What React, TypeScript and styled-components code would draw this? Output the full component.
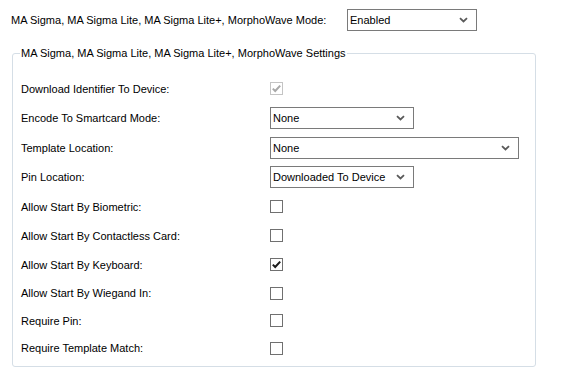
import styled, { createGlobalStyle } from "styled-components";

const GlobalStyle = createGlobalStyle`
  html, body {
    margin: 0;
    padding: 0;
    background: #ffffff;
  }
  body {
    font-family: Tahoma, "Liberation Sans", Arial, sans-serif;
    font-size: 11px;
    color: #000000;
  }
`;

type SelectProps = {
  value: string;
  width: number;
};

function Select({ value, width }: SelectProps) {
  return (
    <SelectBox $width={width}>
      <SelectText>{value}</SelectText>
      <Chevron width="9" height="6" viewBox="0 0 9 6">
        <path d="M1 1.2 L4.5 4.5 L8 1.2" fill="none" stroke="#5a5a5a" strokeWidth="1.8" />
      </Chevron>
    </SelectBox>
  );
}

type CheckProps = {
  checked?: boolean;
  disabled?: boolean;
};

function Check({ checked, disabled }: CheckProps) {
  return (
    <CheckBox $disabled={disabled}>
      {checked && (
        <svg width="11" height="11" viewBox="0 0 11 11">
          <path
            d="M1.8 5.6 L4.2 8 L9.2 2.6"
            fill="none"
            stroke={disabled ? "#a8a8a8" : "#1c1c1c"}
            strokeWidth="2"
          />
        </svg>
      )}
    </CheckBox>
  );
}

type Field = {
  label: string;
  height: number;
  control: React.ReactNode;
};

const fields: Field[] = [
  { label: "Download Identifier To Device:", height: 29, control: <Check checked disabled /> },
  { label: "Encode To Smartcard Mode:", height: 30, control: <Select value="None" width={144} /> },
  { label: "Template Location:", height: 29, control: <Select value="None" width={249} /> },
  { label: "Pin Location:", height: 30, control: <Select value="Downloaded To Device" width={144} /> },
  { label: "Allow Start By Biometric:", height: 29, control: <Check /> },
  { label: "Allow Start By Contactless Card:", height: 29, control: <Check /> },
  { label: "Allow Start By Keyboard:", height: 29, control: <Check checked /> },
  { label: "Allow Start By Wiegand In:", height: 28, control: <Check /> },
  { label: "Require Pin:", height: 27, control: <Check /> },
  { label: "Require Template Match:", height: 28, control: <Check /> },
];

export default function App() {
  return (
    <>
      <GlobalStyle />
      <Page>
        <ModeRow>
          <ModeLabel>MA Sigma, MA Sigma Lite, MA Sigma Lite+, MorphoWave Mode:</ModeLabel>
          <Select value="Enabled" width={130} />
        </ModeRow>
        <Group>
          <Legend>MA Sigma, MA Sigma Lite, MA Sigma Lite+, MorphoWave Settings</Legend>
          <Rows>
            {fields.map((f) => (
              <Row key={f.label} $height={f.height}>
                <RowLabel>{f.label}</RowLabel>
                {f.control}
              </Row>
            ))}
          </Rows>
        </Group>
      </Page>
    </>
  );
}

const Page = styled.div`
  width: 567px;
  height: 385px;
  padding-top: 9px;
  box-sizing: border-box;
`;

const ModeRow = styled.div`
  display: flex;
  align-items: center;
  padding-left: 11px;
  height: 22px;
`;

const ModeLabel = styled.span`
  width: 336px;
  white-space: nowrap;
`;

const SelectBox = styled.div<{ $width: number }>`
  width: ${({ $width }) => $width}px;
  height: 22px;
  box-sizing: border-box;
  border: 1px solid #7a7a7a;
  background: #ffffff;
  display: flex;
  align-items: center;
  justify-content: space-between;
  padding: 0 8px 0 2px;
`;

const SelectText = styled.span`
  white-space: nowrap;
`;

const Chevron = styled.svg`
  display: block;
`;

const CheckBox = styled.div<{ $disabled?: boolean }>`
  width: 13px;
  height: 13px;
  box-sizing: border-box;
  border: 1px solid ${({ $disabled }) => ($disabled ? "#c4c4c4" : "#707070")};
  background: #ffffff;
  display: flex;
  align-items: center;
  justify-content: center;
`;

const Group = styled.fieldset`
  margin: 16px 0 0 12px;
  width: 524px;
  height: 320px;
  box-sizing: border-box;
  border: 1px solid #d5dee6;
  border-radius: 3px;
  padding: 0 0 0 8px;
`;

const Legend = styled.legend`
  padding: 0 1px 0 1px;
  margin-left: -1px;
  line-height: 13px;
`;

const Rows = styled.div`
  display: flex;
  flex-direction: column;
  padding-top: 14px;
`;

const Row = styled.div<{ $height: number }>`
  display: flex;
  align-items: center;
  height: ${({ $height }) => $height}px;
`;

const RowLabel = styled.span`
  width: 249px;
  white-space: nowrap;
`;
